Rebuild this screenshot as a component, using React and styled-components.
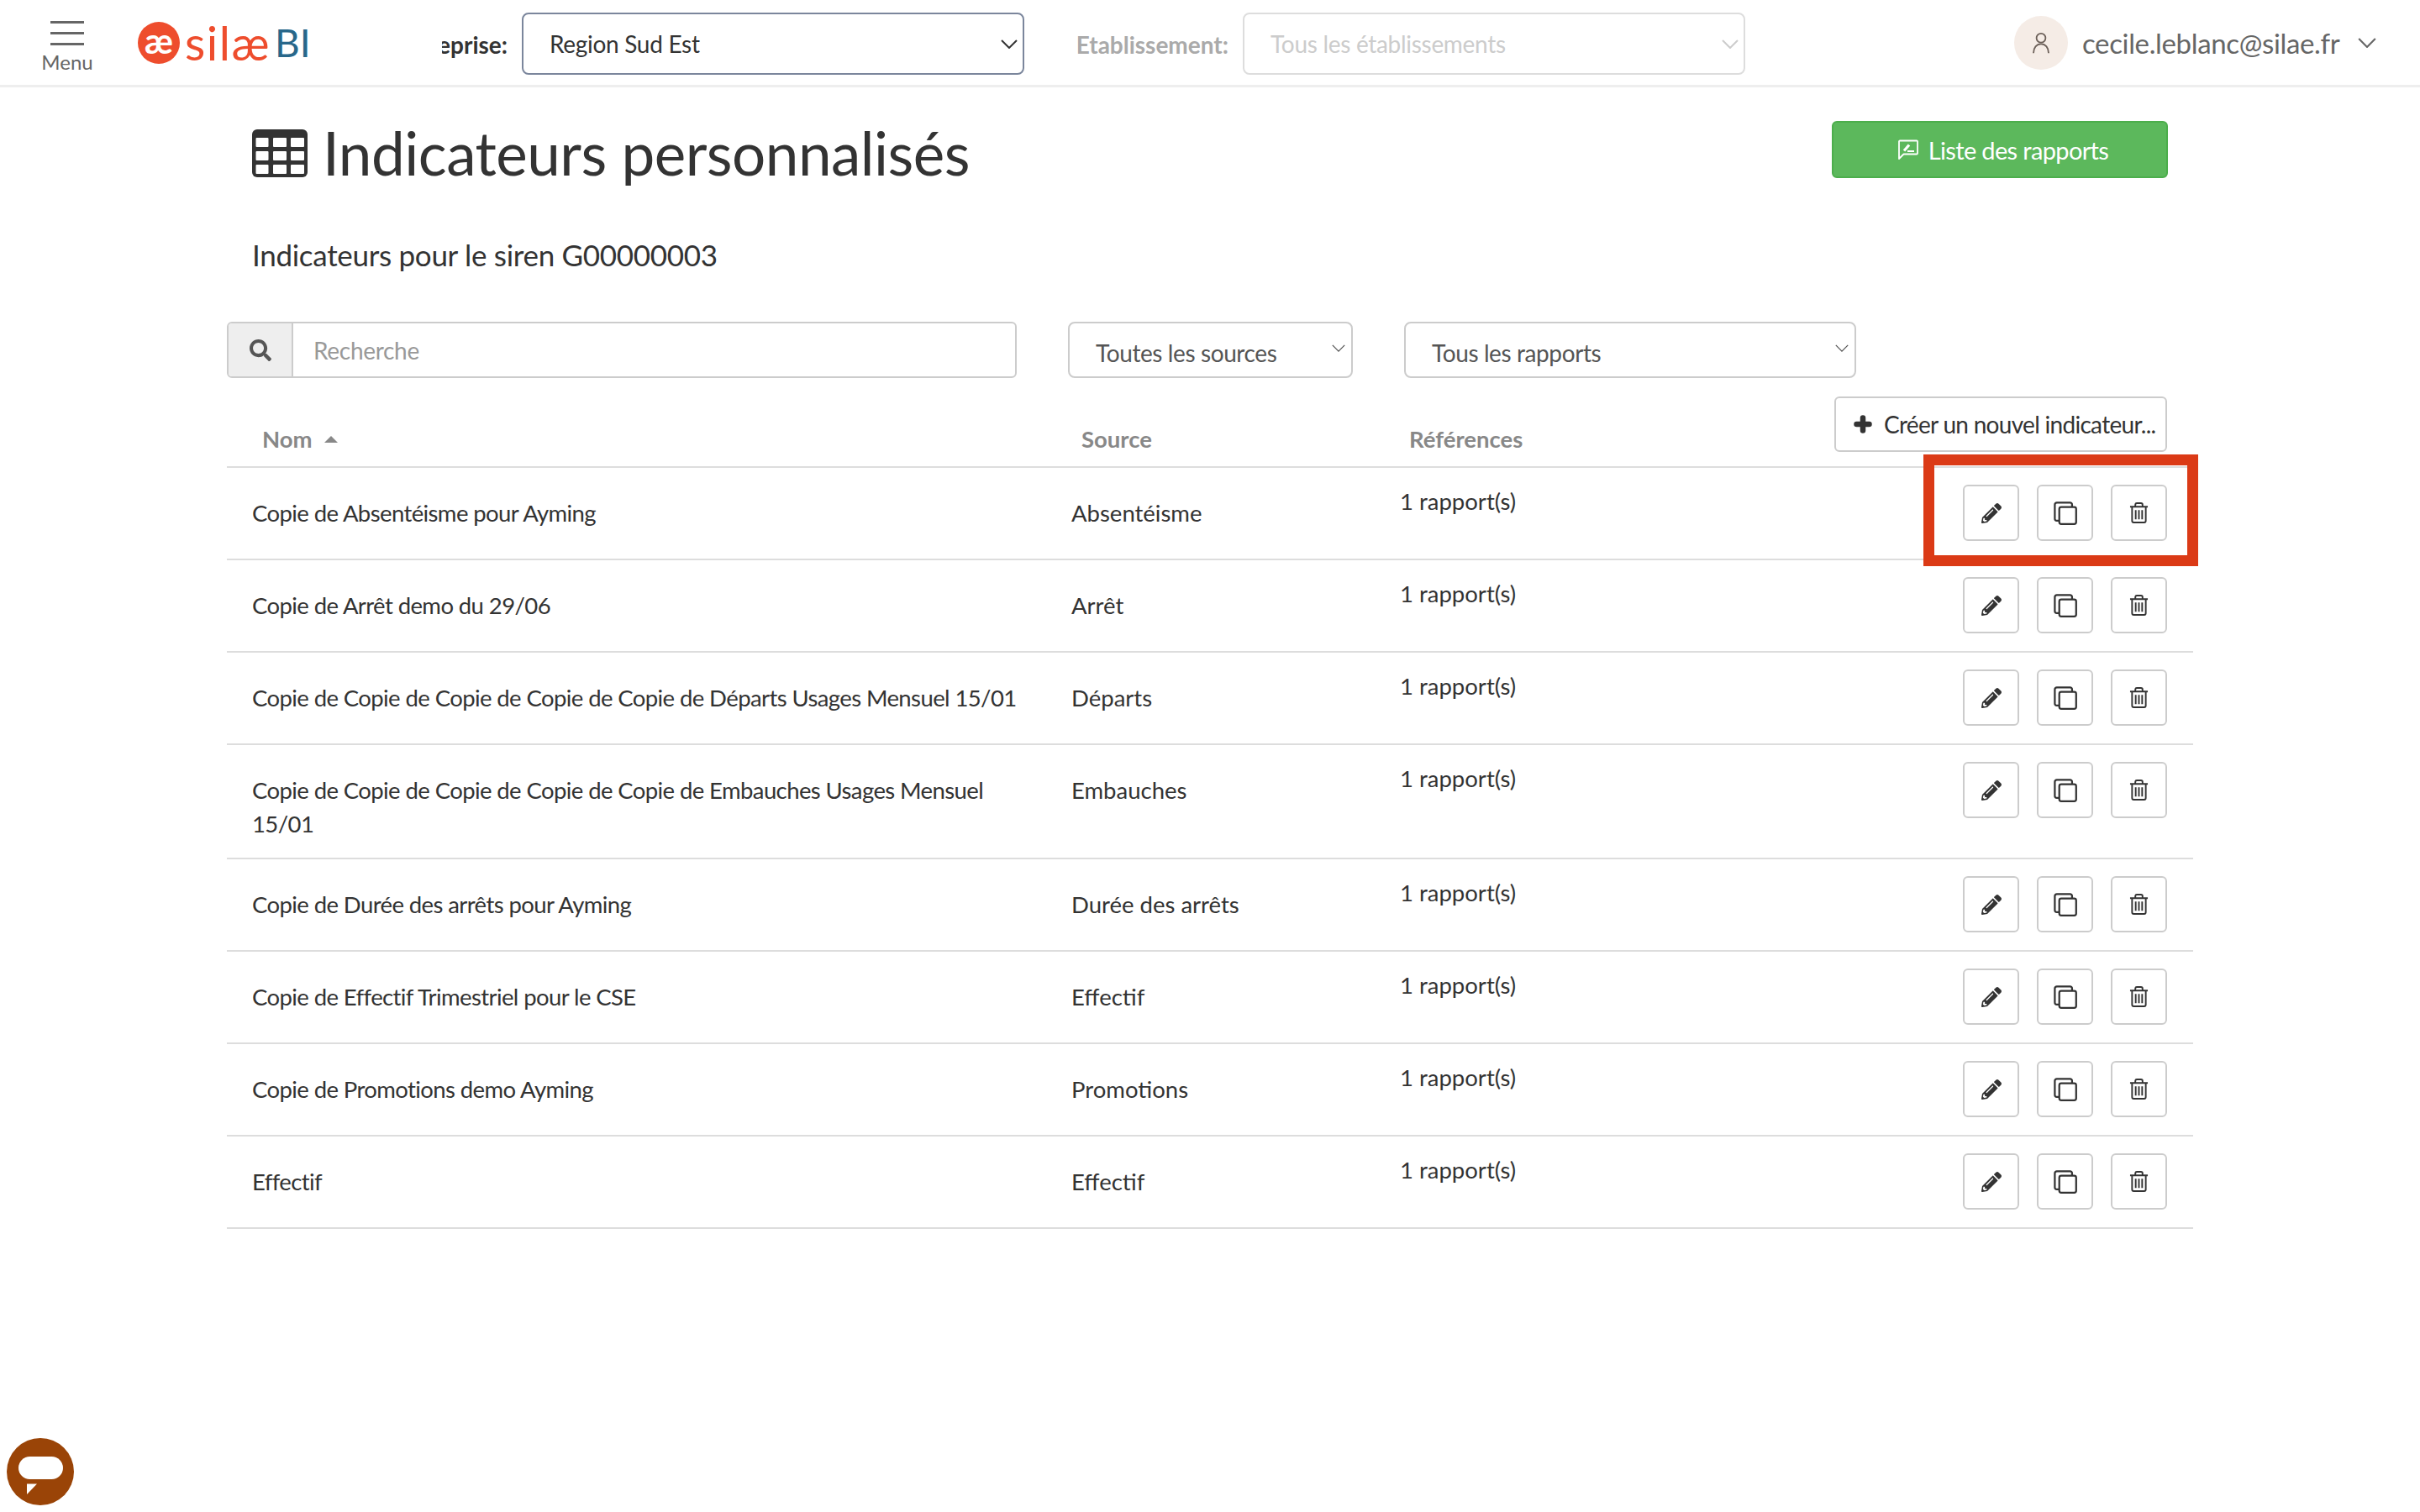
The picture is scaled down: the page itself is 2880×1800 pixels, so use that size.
import React from 'react';
import styled, { createGlobalStyle } from 'styled-components';
import { FaPencilAlt, FaSearch } from 'react-icons/fa';

const Global = createGlobalStyle`
  html, body { margin: 0; padding: 0; background: #fff; }
  body { font-family: "Lato", "Noto Sans", sans-serif; color: #333; }
  * { box-sizing: border-box; }
`;
const Page = styled.div`width: 2880px; height: 1800px; position: relative; overflow: hidden;`;
const Header = styled.header`
  height: 104px; border-bottom: 3px solid #eee; display: flex; align-items: flex-start;
`;
const MenuButton = styled.div`
  width: 160px; padding-top: 25px; display: flex; flex-direction: column; align-items: center;
  color: #666; font-size: 24px; line-height: 28px;
`;
const MenuBars = styled.div`
  width: 40px; height: 29px; margin-bottom: 6px;
  border-top: 3px solid #666; border-bottom: 3px solid #666; position: relative;
  &::after { content: ''; position: absolute; left: 0; right: 0; top: 10px; height: 3px; background: #666; }
`;
const Logo = styled.div`
  width: 362px; margin-left: 4px; padding-top: 26px; display: flex; align-items: center; height: 76px;
`;
const LogoMark = styled.div`
  width: 50px; height: 50px; border-radius: 50%; background: #ee4d2d; color: #fff; font-size: 42px; font-weight: 700;
  display: flex; align-items: center; justify-content: center; line-height: 1; padding-bottom: 6px;
`;
const LogoName = styled.span`
  margin-left: 6px; color: #ee4d2d; font-size: 56px; line-height: 50px; font-weight: 400; letter-spacing: 1.5px;
`;
const LogoBi = styled.span`
  margin-left: 5px; color: #28678a; font-size: 46px; line-height: 50px;
`;
const FieldLabel = styled.div`
  height: 104px; display: flex; align-items: center; justify-content: flex-end; overflow: hidden; white-space: nowrap;
  width: ${p => p.$w}px; flex: none; font-size: 28px; font-weight: 700; color: ${p => p.$muted ? '#aaa' : '#333'};
  padding-top: 1px;
`;
const TopSelect = styled.div`
  margin: 15px 0 0 17px; width: 598px; height: 74px; flex: none; border-radius: 8px; display: flex; align-items: center;
  border: 2px solid ${p => p.$off ? '#ddd' : '#7b869c'}; color: ${p => p.$off ? '#ccc' : '#333'};
  padding: 0 6px 0 31px; font-size: 28px; letter-spacing: -0.3px; justify-content: space-between;
`;
const Chevron = styled.svg`flex: none; fill: none; stroke: currentColor; stroke-width: ${p => p.$sw || 2};`;
const User = styled.div`
  margin-left: 320px; padding-top: 19px; display: flex; align-items: flex-start; flex: none; color: #666;
`;
const Avatar = styled.div`
  width: 64px; height: 64px; border-radius: 50%; background: #f5ece6; color: #6b5f58;
  display: flex; align-items: center; justify-content: center;
`;
const Email = styled.div`margin-left: 17px; font-size: 33px; line-height: 64px; letter-spacing: -0.35px;`;
const UserCaret = styled.div`margin-left: 22px; height: 64px; display: flex; align-items: center; color: #666;`;
const Main = styled.main`width: 2340px; margin-left: 270px;`;
const TitleRow = styled.div`display: flex; align-items: flex-start; justify-content: space-between; padding: 40px 30px 0 30px; height: 150px;`;
const Title = styled.h1`
  margin: -7px 0 0; font-weight: 400; font-size: 71px; line-height: 90px; color: #333; display: flex; align-items: center; gap: 18px; letter-spacing: -0.5px;
`;
const GreenButton = styled.div`
  width: 400px; height: 68px; background: #5cb85c; border: 2px solid #4cae4c; border-radius: 6px; color: #fff; padding-left: 8px;
  display: flex; align-items: center; justify-content: center; gap: 12px; font-size: 29px; letter-spacing: -0.65px;
`;
const Subtitle = styled.div`padding-left: 30px; font-size: 35px; line-height: 50px; color: #333; letter-spacing: -0.3px; height: 50px; margin-top: 24px;`;
const Filters = styled.div`display: flex; margin-top: 55px; height: 67px; align-items: stretch;`;
const SearchBox = styled.div`width: 940px; border: 2px solid #ccc; border-radius: 6px; display: flex; overflow: hidden;`;
const SearchAddon = styled.div`
  width: 77px; background: #eee; border-right: 2px solid #ccc; display: flex; align-items: center; justify-content: center; color: #555;
`;
const SearchInput = styled.div`padding-left: 24px; display: flex; align-items: center; font-size: 28px; color: #999; letter-spacing: -0.3px;`;
const FilterSelect = styled.div`
  width: ${p => p.$w}px; margin-left: ${p => p.$ml}px; border: 2px solid #ccc; border-radius: 8px; display: flex; align-items: center;
  justify-content: space-between; padding: 7px 7px 0 31px; font-size: 28px; color: #555; letter-spacing: -0.4px;
`;
const FilterCaret = styled(Chevron)`margin-top: -11px;`;
const CreateRow = styled.div`display: flex; justify-content: flex-end; padding-right: 31px; margin-top: 22px; height: 66px;`;
const CreateButton = styled.div`
  width: 396px; border: 2px solid #ccc; border-radius: 6px; display: flex; align-items: center; gap: 14px; padding-left: 21px;
  font-size: 28px; color: #333; white-space: nowrap; letter-spacing: -0.7px;
`;
const Table = styled.div`margin-top: -35px;`;
const HeadRow = styled.div`
  display: grid; grid-template-columns: 1017px 390px 1fr; height: 54px; border-bottom: 2px solid #ddd; padding-top: 3px;
  color: #888; font-size: 27.5px; font-weight: 700; line-height: 34px;
`;
const HeadCell = styled.div`padding-left: ${p => p.$pl}px; display: flex; align-items: flex-start; gap: 14px;`;
const SortArrow = styled.span`
  width: 0; height: 0; border-left: 8px solid transparent; border-right: 8px solid transparent; border-bottom: 8px solid #888; margin-top: 13px;
`;
const Row = styled.div`
  display: grid; grid-template-columns: 1005px 391px 1fr auto; border-bottom: 2px solid #ddd; padding: 0 31px 0 30px;
  min-height: 110px; font-size: 27.5px; line-height: 40px; color: #333;
`;
const NameCell = styled.div`padding: 34px 65px 20px 0; letter-spacing: -0.6px;`;
const SourceCell = styled.div`padding-top: 34px; margin-left: -30px;`;
const RefCell = styled.div`padding-top: 20px; margin-left: -30px;`;
const Actions = styled.div`display: flex; gap: 21px; padding-top: 20px;`;
const IconButton = styled.div`
  width: 67px; height: 67px; border: 2px solid #ccc; border-radius: 6px; display: flex; align-items: center; justify-content: center; color: #333;
`;
const Highlight = styled.div`
  position: absolute; left: 2289px; top: 541px; width: 327px; height: 133px; border: 13px solid #db3a16;
`;
const ChatBubble = styled.div`
  position: absolute; left: 8px; top: 1712px; width: 80px; height: 80px; border-radius: 50%; background: #9a4407;
`;

const Down = ({ size = 20, h = 11, sw }) => (
  <Chevron $sw={sw} width={size} height={h} viewBox="0 0 20 11"><path d="M1 1l9 9 9-9" /></Chevron>
);
const TableIcon = () => (
  <svg width="66" height="57" viewBox="0 0 66 57">
    <rect width="66" height="57" rx="6" fill="#333" />
    {[10, 26, 42].map(y => [4.500, 25, 46].map(x => (
      <rect key={`${x}-${y}`} x={x} y={y} width={x === 4.500 ? 15 : 16} height={11} rx="1" fill="#fff" />
    )))}
  </svg>
);
const PlusIcon = () => (
  <svg width="22" height="22" viewBox="0 0 22 22" fill="none" stroke="currentColor" strokeWidth="6.500" strokeLinecap="round">
    <path d="M11 3.500v15M3.500 11h15" />
  </svg>
);
const CopyIcon = () => (
  <svg width="28" height="28" viewBox="0 0 30 30" fill="none" stroke="currentColor" strokeWidth="2.400">
    <rect x="7.200" y="7.200" width="21.500" height="21.500" rx="2.500" />
    <path d="M7 24.500H4a2.500 2.500 0 0 1-2.500-2.500V4A2.500 2.500 0 0 1 4 1.500h17A2.500 2.500 0 0 1 23.500 4v3" />
  </svg>
);
const TrashIcon = () => (
  <svg width="23" height="25" viewBox="0 0 24 26" fill="none" stroke="currentColor" strokeWidth="2">
    <path d="M1 5.500h22M7.500 5.500V3A2 2 0 0 1 9.500 1h5a2 2 0 0 1 2 2v2.500M3.500 5.500V23a2 2 0 0 0 2 2h13a2 2 0 0 0 2-2V5.500" />
    <path d="M8 9.500V21M12 9.500V21M16 9.500V21" />
  </svg>
);
const ReportIcon = () => (
  <svg width="24" height="24" viewBox="0 0 24 24" fill="none" stroke="#fff" strokeWidth="1.800">
    <path d="M2 1.500h20a1 1 0 0 1 1 1v14a1 1 0 0 1-1 1H6.500L1 23V2.500a1 1 0 0 1 1-1z" strokeLinejoin="round" />
    <path d="M7 13.500l6-7" strokeWidth="3.200" />
    <path d="M11 14h8" strokeWidth="2" />
  </svg>
);
const UserIcon = () => (
  <svg width="22" height="27" viewBox="0 0 24 30" fill="none" stroke="currentColor" strokeWidth="2">
    <circle cx="12" cy="8" r="6" />
    <path d="M2 28c0-7 4-12 10-12s10 5 10 12" />
  </svg>
);
const ChatIcon = () => (
  <svg width="80" height="80" viewBox="0 0 80 80">
    <rect x="14" y="22" width="53" height="27" rx="13.500" fill="#fff" />
    <path d="M24 54.500h12L24 67z" fill="#fff" />
  </svg>
);

const rows = [
  ['Copie de Absentéisme pour Ayming', 'Absentéisme'],
  ['Copie de Arrêt demo du 29/06', 'Arrêt'],
  ['Copie de Copie de Copie de Copie de Copie de Départs Usages Mensuel 15/01', 'Départs'],
  ['Copie de Copie de Copie de Copie de Copie de Embauches Usages Mensuel 15/01', 'Embauches'],
  ['Copie de Durée des arrêts pour Ayming', 'Durée des arrêts'],
  ['Copie de Effectif Trimestriel pour le CSE', 'Effectif'],
  ['Copie de Promotions demo Ayming', 'Promotions'],
  ['Effectif', 'Effectif'],
];

export default function App() {
  return (
    <Page>
      <Global />
      <Header>
        <MenuButton><MenuBars />Menu</MenuButton>
        <Logo>
          <LogoMark>æ</LogoMark>
          <LogoName>silæ</LogoName>
          <LogoBi>BI</LogoBi>
        </Logo>
        <FieldLabel $w={78}>Entreprise:</FieldLabel>
        <TopSelect>Region Sud Est <Down /></TopSelect>
        <FieldLabel $w={243} $muted>Etablissement:</FieldLabel>
        <TopSelect $off>Tous les établissements <Down /></TopSelect>
        <User>
          <Avatar><UserIcon /></Avatar>
          <Email>cecile.leblanc@silae.fr</Email>
          <UserCaret><Down size={22} h={12} /></UserCaret>
        </User>
      </Header>
      <Main>
        <TitleRow>
          <Title><TableIcon />Indicateurs personnalisés</Title>
          <GreenButton><ReportIcon />Liste des rapports</GreenButton>
        </TitleRow>
        <Subtitle>Indicateurs pour le siren G00000003</Subtitle>
        <Filters>
          <SearchBox>
            <SearchAddon><FaSearch size={26} /></SearchAddon>
            <SearchInput>Recherche</SearchInput>
          </SearchBox>
          <FilterSelect $w={339} $ml={61}>Toutes les sources <FilterCaret $sw={1.6} width="16" height="9" viewBox="0 0 20 11"><path d="M1 1l9 9 9-9" /></FilterCaret></FilterSelect>
          <FilterSelect $w={538} $ml={61}>Tous les rapports <FilterCaret $sw={1.6} width="16" height="9" viewBox="0 0 20 11"><path d="M1 1l9 9 9-9" /></FilterCaret></FilterSelect>
        </Filters>
        <CreateRow>
          <CreateButton><PlusIcon />Créer un nouvel indicateur...</CreateButton>
        </CreateRow>
        <Table>
          <HeadRow>
            <HeadCell $pl={42}>Nom <SortArrow /></HeadCell>
            <HeadCell $pl={0}>Source</HeadCell>
            <HeadCell $pl={0}>Références</HeadCell>
          </HeadRow>
          {rows.map(([name, source]) => (
            <Row key={name}>
              <NameCell>{name}</NameCell>
              <SourceCell>{source}</SourceCell>
              <RefCell>1 rapport(s)</RefCell>
              <Actions>
                <IconButton><FaPencilAlt size={24} /></IconButton>
                <IconButton><CopyIcon /></IconButton>
                <IconButton><TrashIcon /></IconButton>
              </Actions>
            </Row>
          ))}
        </Table>
      </Main>
      <Highlight />
      <ChatBubble><ChatIcon /></ChatBubble>
    </Page>
  );
}
